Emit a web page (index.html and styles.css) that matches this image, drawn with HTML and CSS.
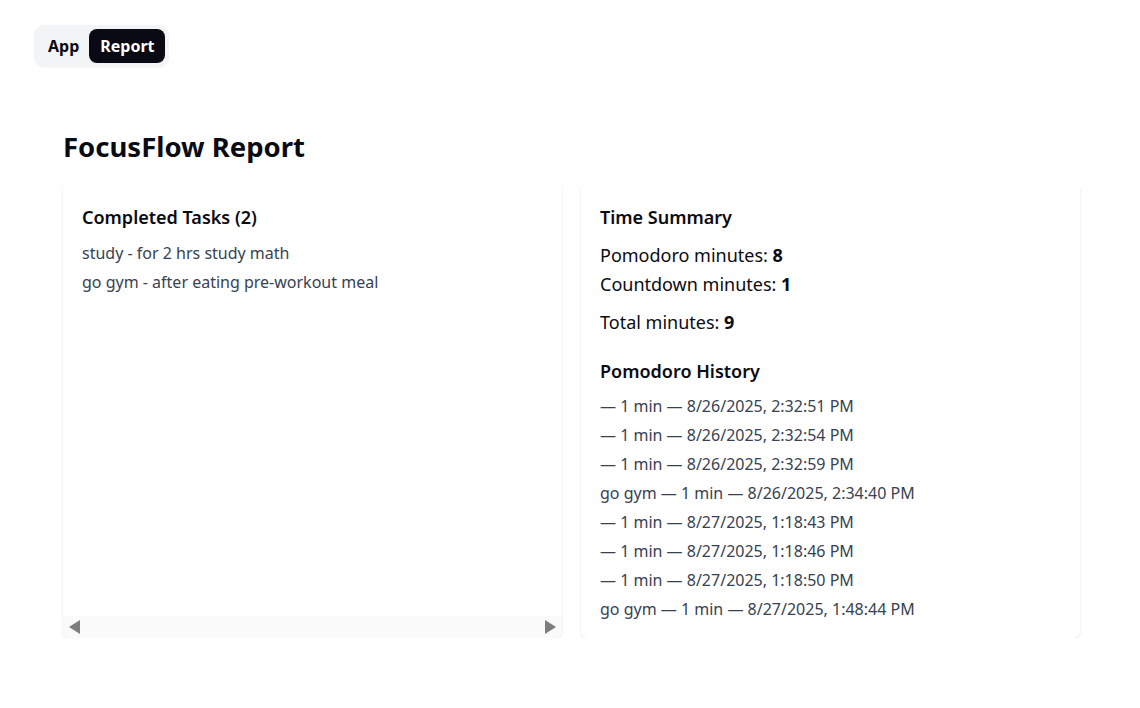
FILE: index.html
```html
<!DOCTYPE html>
<html lang="en">
<head>
<meta charset="utf-8">
<title>FocusFlow Report</title>
<link rel="stylesheet" href="styles.css">
</head>
<body>
<nav class="nav">
  <a class="nav-btn">App</a>
  <a class="nav-btn active">Report</a>
</nav>
<main class="page">
  <h1 class="title">FocusFlow Report</h1>
  <div class="grid">
    <section class="card">
      <div class="card-body">
        <h2 class="card-title">Completed Tasks (2)</h2>
        <ul class="list">
          <li>study - for 2 hrs study math</li>
          <li>go gym - after eating pre-workout meal</li>
        </ul>
      </div>
      <div class="hscroll">
        <span class="arrow arrow-left"></span>
        <span class="arrow arrow-right"></span>
      </div>
    </section>
    <section class="card">
      <div class="card-body">
        <h2 class="card-title">Time Summary</h2>
        <div class="stats">
          <p class="stat">Pomodoro minutes: <b>8</b></p>
          <p class="stat">Countdown minutes: <b>1</b></p>
          <p class="stat stat-total">Total minutes: <b>9</b></p>
        </div>
        <h2 class="card-title history-title">Pomodoro History</h2>
        <ul class="list">
          <li>— 1 min — 8/26/2025, 2:32:51 PM</li>
          <li>— 1 min — 8/26/2025, 2:32:54 PM</li>
          <li>— 1 min — 8/26/2025, 2:32:59 PM</li>
          <li>go gym — 1 min — 8/26/2025, 2:34:40 PM</li>
          <li>— 1 min — 8/27/2025, 1:18:43 PM</li>
          <li>— 1 min — 8/27/2025, 1:18:46 PM</li>
          <li>— 1 min — 8/27/2025, 1:18:50 PM</li>
          <li>go gym — 1 min — 8/27/2025, 1:48:44 PM</li>
        </ul>
      </div>
    </section>
  </div>
</main>
</body>
</html>
```

FILE: styles.css
```css
* { box-sizing: border-box; }
html, body { margin: 0; padding: 0; background: #ffffff; }
body {
  font-family: "Noto Sans", "Open Sans", sans-serif;
  color: #0b0b14;
}
.nav {
  display: inline-flex;
  margin: 25px 0 0 34px;
  padding: 4px;
  background: #f3f4f6;
  border-radius: 10px;
  box-shadow: 0 1px 2px rgba(0,0,0,0.04);
}
.nav-btn {
  display: block;
  padding: 5px 10px;
  font-size: 16px;
  line-height: 24px;
  font-weight: 700;
  color: #0b0b14;
  border-radius: 8px;
}
.nav-btn.active { background: #0a0a14; color: #ffffff; padding: 5px 10px 5px 11px; }
.page {
  width: 1017px;
  margin: 0 60px 0 63px;
  padding-top: 60px;
}
.title {
  margin: 0 0 16px 0;
  font-size: 27.5px;
  line-height: 40px;
  font-weight: 700;
  color: #0b0b14;
}
.grid {
  display: grid;
  grid-template-columns: 1fr 1fr;
  gap: 19px;
}
.card {
  background: #ffffff;
  border-radius: 6px;
  box-shadow: 0 1px 3px rgba(0,0,0,0.09), 0 1px 2px rgba(0,0,0,0.03);
  display: flex;
  flex-direction: column;
  min-height: 455px;
  overflow: hidden;
}
.card-body { padding: 20px 19px 11px; flex: 1; }
.card-title {
  margin: 0 0 8px 0;
  font-size: 18px;
  line-height: 28px;
  font-weight: 600;
  color: #0b0b14;
}
.list { list-style: none; margin: 0; padding: 0; }
.list li {
  font-size: 16px;
  line-height: 21px;
  padding: 4px 0;
  color: #374151;
}
.stats { margin: 10px 0 20px; }
.stat { margin: 0; font-size: 18px; line-height: 29px; color: #0b0b14; }
.stat b { font-weight: 700; }
.stat-total { margin-top: 9px; }
.history-title { margin-bottom: 7px; }
.hscroll {
  height: 22px;
  background: #fafafa;
  display: flex;
  justify-content: space-between;
  align-items: center;
  padding: 0 6px;
}
.arrow {
  width: 0;
  height: 0;
  border-top: 7px solid transparent;
  border-bottom: 7px solid transparent;
}
.arrow-left { border-right: 11px solid #7d7d7d; }
.arrow-right { border-left: 11px solid #7d7d7d; }
```
